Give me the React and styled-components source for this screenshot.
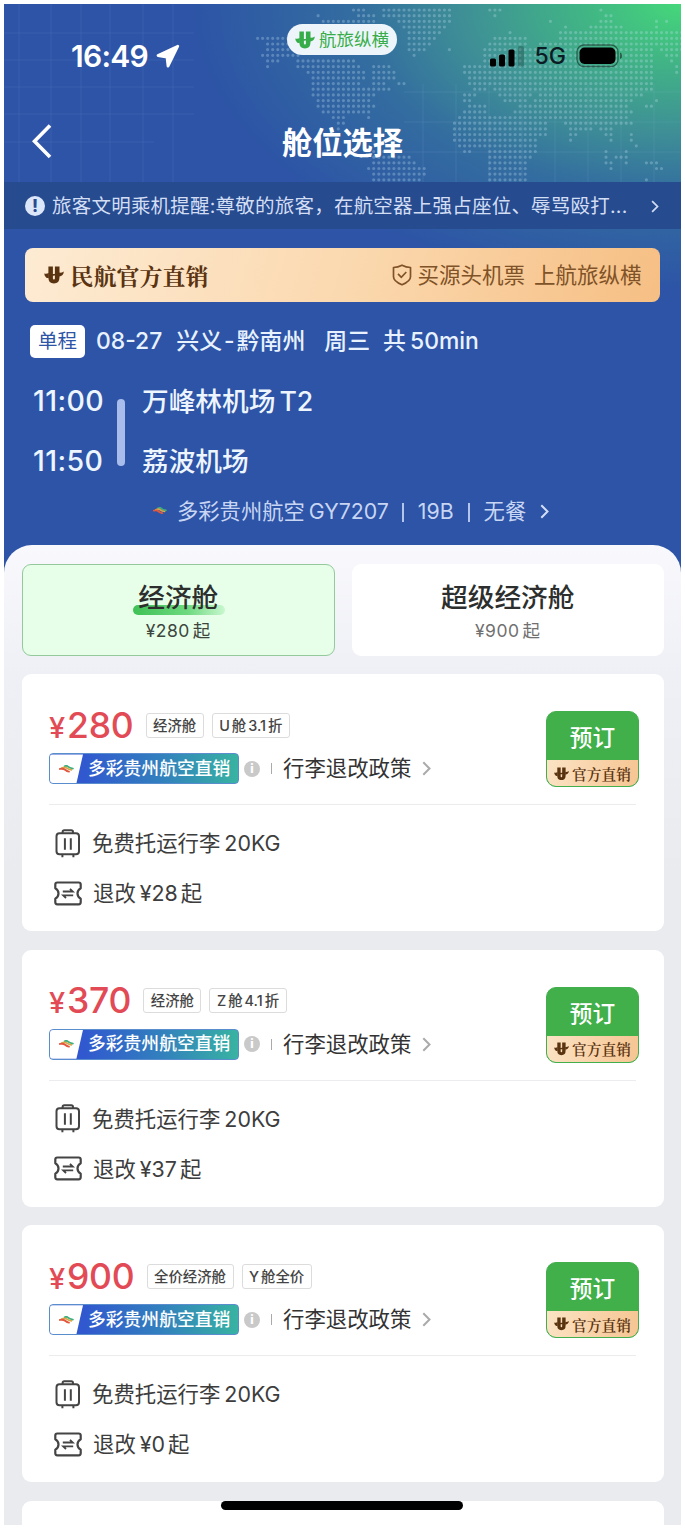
import React from "react"
import styled, { createGlobalStyle } from "styled-components"

const fares = [
  { price: "280", cabin: "经济舱", rate: ["U", "舱", "3.1", "折"], refund: "28" },
  { price: "370", cabin: "经济舱", rate: ["Z", "舱", "4.1", "折"], refund: "37" },
  { price: "900", cabin: "全价经济舱", rate: ["Y", "舱全价"], refund: "0" },
]

// Dotted world map: one entry per row, each a list of [from, to] spans
const mapRows = [
  [[353, 363], [385, 450], [490, 501], [603, 603]],
  [[319, 319], [358, 373], [383, 450], [495, 495], [605, 610]],
  [[323, 341], [345, 372], [398, 450], [550, 550], [603, 610], [655, 655], [665, 665]],
  [[403, 443], [565, 565], [590, 620], [655, 655]],
  [[408, 440], [510, 510], [560, 680]],
  [[258, 287], [410, 436], [495, 523], [560, 680]],
  [[268, 287], [410, 430], [490, 526], [540, 680]],
  [[269, 287], [408, 425], [450, 450], [485, 653], [663, 680]],
  [[263, 300], [415, 415], [485, 651], [668, 676]],
  [[268, 277], [298, 352], [485, 650], [673, 673]],
  [[268, 268], [300, 358], [375, 387], [465, 470], [475, 650], [675, 675]],
  [[308, 365], [373, 393], [465, 650], [675, 675]],
  [[313, 365], [373, 395], [470, 651]],
  [[313, 358], [373, 383], [398, 405], [468, 650]],
  [[313, 388], [473, 487], [493, 518], [525, 650]],
  [[313, 373], [463, 477], [500, 530], [540, 643]],
  [[318, 371], [463, 471], [503, 526], [535, 630], [655, 655]],
  [[318, 373], [468, 486], [520, 626], [645, 650]],
  [[323, 367], [463, 486], [516, 630]],
  [[333, 345], [370, 370], [458, 530], [535, 626]],
  [[338, 341], [455, 545], [565, 631]],
  [[340, 340], [455, 543], [570, 590], [600, 610]],
  [[455, 543], [571, 576], [606, 610], [630, 630]],
  [[455, 536], [573, 573], [610, 610], [630, 630]],
  [[458, 536], [635, 635]],
  [[376, 400], [463, 470], [488, 536], [605, 605], [626, 626]],
  [[375, 410], [488, 530], [605, 605], [615, 626]],
  [[373, 416], [488, 526], [605, 610], [625, 625], [645, 656]],
  [[370, 426], [488, 523], [610, 610], [655, 660]],
  [[373, 426], [488, 525]],
  [[375, 421], [490, 525], [645, 645]],
]

const dots = mapRows
  .map((spans, row) =>
    spans
      .map(([from, to]) => {
        let d = ""
        for (let x = Math.round(from / 5.05) * 5.05; x <= to + 2.6; x += 5.05) {
          d += `M${(x - 4).toFixed(1)} ${(6 + row * 5.66).toFixed(1)}h.01`
        }
        return d
      })
      .join("")
  )
  .join("")

const WorldMap = () => (
  <MapS width="677" height="230" viewBox="0 0 677 230" fill="none">
    <path
      d="M15 0V178M47 0V178M77 0V178M106 0V178M139 0V178M169 0V178M0 29H190M0 56H190M0 83H190M0 110H190M0 138H150"
      stroke="#7fa0e0"
      strokeOpacity=".14"
    />
    <path
      d="M419 80V225M452 80V225M485 80V225M518 80V225M551 80V225M584 80V225M617 80V225M650 80V225M400 88H677M400 118H677M400 148H677"
      stroke="#a8d4ee"
      strokeOpacity=".11"
    />
    <path d={dots} stroke="#c3e2f2" strokeOpacity=".3" strokeWidth="3.2" strokeLinecap="round" />
  </MapS>
)

const BrandMark = ({ size = 19, color = "#5a3411" }) => (
  <svg width={size} height={size * 0.9} viewBox="0 0 20 18" fill="none">
    <path d="M4.4.5h4.500v12q0 1 1 1t1-1V.5h4.600v10.800q0 6.200-5.600 6.200t-5.500-6.200z" fill={color} />
    <path
      d="M.2 7.400q2.600.8 4.600-.6v5.400Q1.800 12.200.8 9.700zM15 6.600q2.600.4 4.800-1.200-.2 4.300-4.800 5z"
      fill={color}
    />
    <path d="M8 8.800q2 .4 4-.6" stroke={color} strokeWidth="1.6" />
  </svg>
)

const Chevron = ({ height = 14, color, weight = 2 }) => (
  <svg width={height * 0.6} height={height} viewBox="0 0 9 15" fill="none">
    <path d="m1.3 1.3 6.2 6.2-6.2 6.2" stroke={color} strokeWidth={weight} />
  </svg>
)

const AirlineMark = ({ width = 15 }) => (
  <svg width={width} height={width * 0.55} viewBox="0 0 20 11" fill="none" strokeLinecap="round">
    <path d="M7.500 1.600q2.500-1.200 4.500.6t6.500 2.600" stroke="#3fae7c" strokeWidth="2.4" />
    <path d="M4 3.800q4-1.600 6.500.4t6 2.200" stroke="#d8a548" strokeWidth="2.4" />
    <path d="M1.200 5.200q4.500-1 7 1.200t5 2.400" stroke="#e2573d" strokeWidth="2.6" />
  </svg>
)

const LuggageIcon = () => (
  <svg width="26" height="29" viewBox="0 0 26 29" fill="none" stroke="#444" strokeWidth="2">
    <rect x="1.5" y="4.3" width="22.5" height="21" rx="3" />
    <path d="M7.600 4V2.900Q7.600 1.200 9.300 1.200h7q1.700 0 1.700 1.700V4M9.900 9.300v11.500M15.800 9.300v11.500M7.400 25.500v2.700M18.400 25.500v2.700" />
  </svg>
)

const TicketIcon = () => (
  <svg width="28" height="25" viewBox="0 0 28 25" fill="none" stroke="#444" strokeWidth="2.2">
    <path
      d="M3.300 1.500h21.400q2 0 2 2v3.700q-3.200 1.900-3.200 5.200t3.200 5.200v3.700q0 2-2 2H3.300q-2 0-2-2v-3.700q3.200-1.900 3.200-5.200T1.300 7.200V3.500q0-2 2-2z"
      strokeLinejoin="round"
    />
    <path d="M8.800 10.500h10l-2.800-2.700M19.200 14.300h-10l2.800 2.700" strokeWidth="1.8" />
  </svg>
)

const FareCard = ({ fare }) => (
  <Card>
    <CardTop>
      <FareInfo>
        <PriceRow>
          <Price>
            <Yen>¥</Yen>
            {fare.price}
          </Price>
          <Tags>
            <Tag>{fare.cabin}</Tag>
            <Tag>
              {fare.rate.map((part, i) => (
                <span key={i}>{part}</span>
              ))}
            </Tag>
          </Tags>
        </PriceRow>
        <SellerRow>
          <Seller>
            <SellerLogo>
              <AirlineMark />
            </SellerLogo>
            <SellerName>多彩贵州航空直销</SellerName>
          </Seller>
          <Info>i</Info>
          <Separator />
          <Policy>行李退改政策</Policy>
          <Chevron height={15} color="#aaa" />
        </SellerRow>
      </FareInfo>
      <BookButton>
        <BookLabel>预订</BookLabel>
        <BookNote>
          <BrandMark size={15} />
          官方直销
        </BookNote>
      </BookButton>
    </CardTop>
    <Perk>
      <LuggageIcon />
      <PerkText>
        免费托运行李<Latin>20KG</Latin>
      </PerkText>
    </Perk>
    <Perk $last>
      <TicketIcon />
      <PerkText>
        退改<Latin>¥{fare.refund}</Latin>起
      </PerkText>
    </Perk>
  </Card>
)

const App = () => (
  <Page>
    <GlobalStyle />
    <Screen>
      <WorldMap />
      <StatusBar>
        <Clock>
          16:49
          <svg width="24" height="24" viewBox="0 0 24 24">
            <path
              d="M21.800 2.200 2 11.500l9 1.700 1 9z"
              fill="#fff"
              stroke="#fff"
              strokeWidth="2.8"
              strokeLinejoin="round"
            />
          </svg>
        </Clock>
        <Pill>
          <BrandMark size={20} color="#37ad49" />
          航旅纵横
        </Pill>
        <Signals>
          <svg width="36" height="22" viewBox="0 0 36 22">
            <rect x="1" y="13.5" width="6" height="8" rx="1.6" />
            <rect x="10" y="9.5" width="6" height="12" rx="1.6" />
            <rect x="19.5" y="4.5" width="6" height="17" rx="1.6" />
            <rect x="29" y="1" width="6" height="20.5" rx="1.6" opacity=".2" />
          </svg>
          5G
          <svg width="47" height="24" viewBox="0 0 47 24">
            <rect x="1" y="1" width="41" height="21.5" rx="7" fill="none" stroke="#000" strokeOpacity=".45" strokeWidth="1.3" />
            <rect x="3.5" y="3.5" width="36" height="16.5" rx="5" />
            <path d="M44 8.500q2.200 1 2.200 3.200T44 15z" opacity=".5" />
          </svg>
        </Signals>
      </StatusBar>
      <NavBar>
        <BackIcon width="20" height="35" viewBox="0 0 20 35" fill="none">
          <path d="M18 1.500 2.500 17.300 18 33" stroke="#fff" strokeWidth="3.6" />
        </BackIcon>
        <Title>舱位选择</Title>
      </NavBar>
      <Notice>
        <Alert>!</Alert>
        <NoticeText>旅客文明乘机提醒:尊敬的旅客，在航空器上强占座位、辱骂殴打...</NoticeText>
        <Chevron height={13} color="#d3def5" />
      </Notice>

      <Banner>
        <BannerTitle>
          <BrandMark size={20} />
          民航官方直销
        </BannerTitle>
        <Slogan>
          <svg width="20" height="22" viewBox="0 0 20 22" fill="none" stroke="#805227" strokeWidth="1.7">
            <path d="M10 1.200q4 2 8.500 2.300v9.300q0 4.500-8.500 8-8.500-3.500-8.500-8V3.500Q6 3.200 10 1.200z" strokeLinejoin="round" />
            <path d="m6 9.800 3.300 3.500 5-5.300" />
          </svg>
          <span>买源头机票</span>
          <span>上航旅纵横</span>
        </Slogan>
      </Banner>

      <Trip>
        <TripType>单程</TripType>
        <TripDate>08-27</TripDate>
        <TripCities>兴义<Dash>-</Dash>黔南州</TripCities>
        <TripDay>周三</TripDay>
        <TripLength>
          共<Latin>50min</Latin>
        </TripLength>
      </Trip>

      <Route>
        <Times>
          <span>11:00</span>
          <span>11:50</span>
        </Times>
        <RouteLine />
        <Airports>
          <span>
            万峰林机场<Latin>T2</Latin>
          </span>
          <span>荔波机场</span>
        </Airports>
      </Route>

      <Flight>
        <AirlineMark width={14} />
        <FlightName>
          多彩贵州航空<Latin>GY7207</Latin>
        </FlightName>
        <Pipe />
        <span>19B</span>
        <Pipe />
        <span>无餐</span>
        <Chevron height={15} color="#d3def5" />
      </Flight>

      <Sheet>
        <Cabins>
          <Cabin $active>
            <CabinName $active>经济舱</CabinName>
            <CabinPrice $active>
              ¥280<span>起</span>
            </CabinPrice>
          </Cabin>
          <Cabin>
            <CabinName>超级经济舱</CabinName>
            <CabinPrice>
              ¥900<span>起</span>
            </CabinPrice>
          </Cabin>
        </Cabins>
        {fares.map(fare => (
          <FareCard key={fare.price} fare={fare} />
        ))}
        <Card />
      </Sheet>
      <HomeBar />
    </Screen>
  </Page>
)

export default App

const GlobalStyle = createGlobalStyle`
  * {
    box-sizing: border-box;
  }

  body {
    margin: 0;
    background: #fff;
    font-family: Inter, "Noto Sans CJK SC", sans-serif;
  }

  svg {
    flex: none;
  }
`

const Page = styled.div`
  height: 1528px;
  padding: 4px 4px 3px;
  overflow: hidden;
`

const Screen = styled.main`
  position: relative;
  display: flex;
  flex-direction: column;

  width: 677px;
  height: 1521px;
  overflow: hidden;

  background: radial-gradient(
      ellipse 490px 285px at 100% 0,
      #45d77a 0%,
      #41b585 20%,
      #3e8f96 45%,
      rgba(53, 116, 158, 0.8) 66%,
      rgba(45, 84, 166, 0) 100%
    ),
    #2d54a6;
`

const MapS = styled.svg`
  position: absolute;
  top: 0;
  left: 0;
`

// Header
const StatusBar = styled.div`
  position: relative;
  display: flex;
  flex: none;
  justify-content: space-between;
  align-items: center;

  height: 100px;
  padding: 4px 58px 0 67px;
`
const Clock = styled.div`
  display: flex;
  align-items: center;
  gap: 8px;

  color: white;
  font-size: 30px;
  font-weight: 600;
  letter-spacing: -0.7px;
`
const Pill = styled.div`
  position: absolute;
  top: 20px;
  left: 283px;
  display: flex;
  align-items: center;
  justify-content: center;
  gap: 4px;

  width: 110px;
  height: 31px;
  border-radius: 16px;
  background: #eef5fa;

  color: #37ad49;
  font-size: 17.5px;
  line-height: 31px;
`
const Signals = styled.div`
  display: flex;
  align-items: center;
  gap: 10px;

  color: #0c1c24;
  font-size: 23px;
  font-weight: 500;
`
const NavBar = styled.div`
  position: relative;
  display: flex;
  flex: none;
  align-items: center;
  justify-content: center;

  height: 78px;
`
const BackIcon = styled.svg`
  position: absolute;
  left: 28px;
  top: 20px;
`
const Title = styled.h1`
  margin: 0;

  color: white;
  font-size: 30.3px;
  font-weight: 700;
  line-height: 44px;
`
const Notice = styled.div`
  position: relative;
  display: flex;
  flex: none;
  align-items: center;

  height: 47px;
  padding: 1px 22px 0 21px;
  background: #264b8f;

  color: #d3def5;
`
const Alert = styled.span`
  flex: none;
  width: 20px;
  height: 20px;
  border-radius: 50%;
  background: #dce6fa;

  color: #264b8f;
  font-size: 17px;
  font-weight: 800;
  line-height: 20px;
  text-align: center;
`
const NoticeText = styled.p`
  flex: 1;
  margin: 0 0 0 7px;

  font-size: 19.5px;
  letter-spacing: 0.22px;
  line-height: 31px;
  white-space: nowrap;
`

// Official sale banner
const Banner = styled.div`
  position: relative;
  display: flex;
  flex: none;
  align-items: center;
  justify-content: space-between;

  height: 54px;
  margin: 19px 21px 0;
  padding: 0 18.5px;
  border-radius: 8px;
  background: linear-gradient(105deg, #fdebd3, #fbd9b0 50%, #f6bf84);
`
const BannerTitle = styled.div`
  display: flex;
  align-items: center;
  gap: 7px;

  color: #5a3411;
  font-family: "Noto Serif CJK SC", "Noto Sans CJK SC", serif;
  font-size: 23px;
  font-weight: 700;
`
const Slogan = styled.div`
  display: flex;
  align-items: center;

  color: #805227;
  font-size: 21.5px;
  line-height: 30px;

  span {
    margin-left: 5px;
  }

  span + span {
    margin-left: 9px;
  }
`

// Trip summary
const Latin = styled.span`
  margin: 0 3px 0 4px;
`
const Trip = styled.div`
  display: flex;
  flex: none;
  align-items: center;

  height: 33px;
  margin: 23px 26px 0;

  color: #e8f2ff;
  font-size: 22.9px;
  font-weight: 500;
  line-height: 35px;
  white-space: nowrap;
`
const TripType = styled.span`
  width: 55px;
  border-radius: 5px;
  background: white;

  color: #2d54a6;
  font-size: 19.5px;
  font-weight: 400;
  line-height: 33px;
  text-align: center;
`
const TripDate = styled.span`
  margin-left: 11px;
`
const TripCities = styled.span`
  margin-left: 14px;
`
const Dash = styled.span`
  margin: 0 2px;
`
const TripDay = styled.span`
  margin-left: 19px;
`
const TripLength = styled.span`
  margin-left: 13px;
`
const Route = styled.div`
  display: flex;
  flex: none;

  margin: 12px 29px 0;

  color: #edf5ff;
  font-size: 26.7px;
  font-weight: 500;
  line-height: 60px;
`
const Times = styled.div`
  display: flex;
  flex-direction: column;

  width: 84px;
  padding-top: 1px;
  font-size: 28.5px;
  letter-spacing: 0.4px;
`
const RouteLine = styled.div`
  width: 8px;
  height: 67px;
  margin-top: 29px;
  border-radius: 4px;
  background: #a9bdec;
`
const Airports = styled.div`
  display: flex;
  flex-direction: column;

  margin-left: 17px;
  padding-top: 1px;
`
const Flight = styled.div`
  display: flex;
  flex: none;
  align-items: center;
  gap: 14px;

  height: 30px;
  margin: 5px 0 0 149px;

  color: #c8d6f4;
  font-size: 21.3px;
  line-height: 30px;
  white-space: nowrap;
`
const FlightName = styled.span`
  margin: 0 -4px;
`
const Pipe = styled.span`
  width: 2px;
  height: 19px;
  margin-top: 3px;
  background: #b4c5ec;
`

// Fares
const Sheet = styled.div`
  flex: none;
  height: 1000px;
  margin-top: 19px;
  padding: 19px 17px 0 18px;
  border-radius: 28px 28px 0 0;
  background: linear-gradient(#f8f8fd 0, #eff0f5 130px, #e9ebef 330px);
`
const Cabins = styled.div`
  display: grid;
  grid-template-columns: 1fr 1fr;
  gap: 17px;
`
const Cabin = styled.div`
  display: flex;
  flex-direction: column;
  align-items: center;

  height: 92px;
  padding-top: 13px;
  border: 1px solid ${props => (props.$active ? "#93c99b" : "white")};
  border-radius: 9px;
  background: ${props => (props.$active ? "#e7ffe9" : "white")};
`
const CabinName = styled.div`
  position: relative;
  z-index: 0;

  color: #2c2f2d;
  font-size: 26.7px;
  font-weight: 500;
  line-height: 38px;

  &::before {
    content: "";
    display: ${props => (props.$active ? "block" : "none")};
    position: absolute;
    z-index: -1;
    left: -5px;
    right: -7px;
    bottom: 1px;
    height: 10px;
    border-radius: 5px;
    background: linear-gradient(90deg, #3fc154, #6fda80 60%, #c9f7cf);
  }
`
const CabinPrice = styled.div`
  color: ${props => (props.$active ? "#3c463e" : "#707070")};
  font-size: 17.5px;
  letter-spacing: 0.5px;
  line-height: 30px;

  span {
    margin-left: 3px;
  }
`
const Card = styled.section`
  height: 257px;
  margin-top: 18.4px;
  padding: 30px 27px 0;
  border-radius: 9px;
  background: white;
`
const CardTop = styled.div`
  display: flex;
  justify-content: space-between;

  height: 101px;
  margin-right: 1px;
  border-bottom: 1px solid #ececee;
`
const FareInfo = styled.div`
  padding-top: 2px;
`
const PriceRow = styled.div`
  display: flex;
  align-items: center;

  height: 38px;
`
const Price = styled.div`
  padding-top: 3px;

  color: #e24b55;
  font-size: 35.5px;
  font-weight: 500;
  letter-spacing: -0.2px;
  line-height: 38px;
`
const Yen = styled.span`
  margin-right: 2px;
  font-size: 29px;
`
const Tags = styled.div`
  display: flex;
  gap: 8px;
  margin-left: 12px;
`
const Tag = styled.span`
  display: flex;
  gap: 2px;

  height: 25px;
  padding: 0 6.5px;
  border: 1px solid #dcdcdc;
  border-radius: 3px;

  color: #444;
  font-size: 14.4px;
  font-weight: 500;
  line-height: 23px;
`
const SellerRow = styled.div`
  display: flex;
  align-items: center;

  height: 31px;
  margin-top: 9px;
`
const Seller = styled.div`
  display: flex;
  align-items: center;

  width: 190px;
  height: 31px;
  border: 1px solid #5a8dcd;
  border-radius: 4px;
  background: linear-gradient(90deg, #3158cf 18%, #3281bd 60%, #38b3a2);
  overflow: hidden;
`
const SellerLogo = styled.div`
  display: flex;
  align-items: center;
  padding-left: 9px;

  width: 33px;
  height: 100%;
  background: white;
  clip-path: polygon(0 0, 100% 0, 80% 100%, 0 100%);
`
const SellerName = styled.span`
  margin-left: 5px;

  color: white;
  font-size: 17.8px;
  font-weight: 500;
  line-height: 28px;
  white-space: nowrap;
`
const Info = styled.span`
  width: 16px;
  height: 16px;
  margin-left: 5px;
  border-radius: 50%;
  background: #c9c9c9;

  color: white;
  font-size: 12px;
  font-weight: 800;
  line-height: 16px;
  text-align: center;
`
const Separator = styled.span`
  width: 1px;
  height: 11px;
  margin: 0 11px;
  background: #aaa;
`
const Policy = styled.span`
  margin-right: 11px;
  padding-bottom: 1px;

  color: #333;
  font-size: 21.4px;
  line-height: 30px;
`
const BookButton = styled.button`
  display: flex;
  flex-direction: column;

  width: 93px;
  height: 76px;
  margin: 7px -3px 0 0;
  padding: 0;
  border: 1.5px solid #43ae4c;
  border-radius: 10px;
  background: #41b04b;
  overflow: hidden;
  font-family: inherit;
`
const BookLabel = styled.span`
  width: 100%;
  height: 48px;

  color: white;
  font-size: 22.7px;
  font-weight: 500;
  line-height: 51px;
  text-align: center;
`
const BookNote = styled.span`
  display: flex;
  flex: 1;
  align-items: center;
  justify-content: center;
  gap: 3px;

  width: 100%;
  background: linear-gradient(100deg, #fbe3c4, #f6c592);

  color: #5a3411;
  font-family: "Noto Serif CJK SC", "Noto Sans CJK SC", serif;
  font-size: 14.7px;
  font-weight: 600;
`
const Perk = styled.div`
  display: flex;
  align-items: center;

  height: 30px;
  margin-top: ${props => (props.$last ? "20px" : "23px")};
  padding-left: ${props => (props.$last ? "5px" : "6px")};
`
const PerkText = styled.span`
  margin-left: 11px;

  color: #3d3d3d;
  font-size: 21.4px;
  line-height: 30px;
`

const HomeBar = styled.div`
  position: absolute;
  left: 217px;
  bottom: 15px;
  width: 242px;
  height: 9px;
  border-radius: 5px;
  background: black;
`
